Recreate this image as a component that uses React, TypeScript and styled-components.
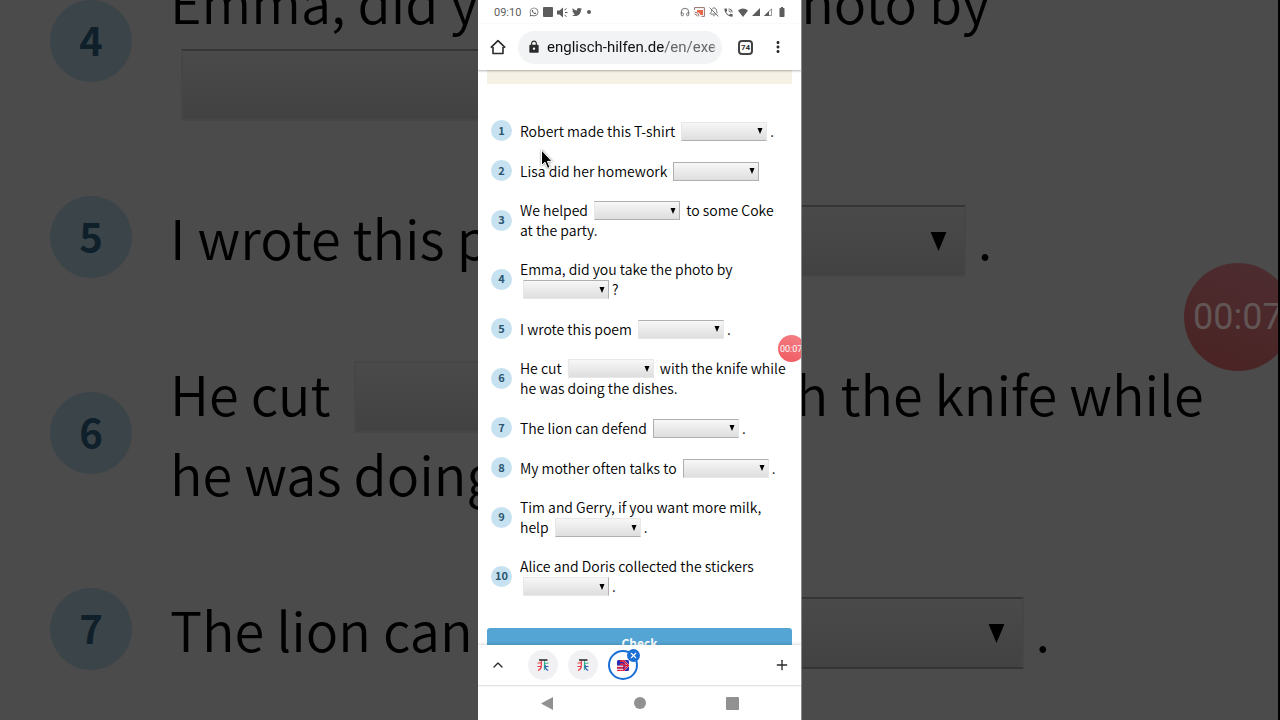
import React from "react";
import styled, { createGlobalStyle, css } from "styled-components";
import { BellOff, ChevronUp, Headphones, Plus, X } from "lucide-react";
import { FaTwitter, FaWhatsapp } from "react-icons/fa";
import { MdBatteryFull, MdLock, MdMoreVert, MdPhoneInTalk } from "react-icons/md";

const textFont = '"Noto Sans CJK SC", "Open Sans", sans-serif';
const systemFont = "Roboto, Arial, sans-serif";

const GlobalStyle = createGlobalStyle`
  * { box-sizing: border-box; }
  body { margin: 0; background: #4b4b4b; overflow: hidden; }
  button { border: 0; padding: 0; background: none; cursor: pointer; }
`;

/* ---------- exercise ---------- */

type Edge = "top" | "right" | "bottom" | "left";

interface Question {
  id: number;
  before: string;
  after: string;
  edges: Edge[];
}

const questions: Question[] = [
  { id: 1, before: "Robert made this T-shirt ", after: ".", edges: ["bottom"] },
  { id: 2, before: "Lisa did her homework ", after: "", edges: ["top", "right", "bottom", "left"] },
  { id: 3, before: "We helped ", after: " to some Coke at the party.", edges: ["top", "right", "bottom"] },
  { id: 4, before: "Emma, did you take the photo by ", after: "?", edges: ["top", "right"] },
  { id: 5, before: "I wrote this poem ", after: ".", edges: ["top"] },
  { id: 6, before: "He cut ", after: " with the knife while he was doing the dishes.", edges: [] },
  { id: 7, before: "The lion can defend ", after: ".", edges: ["top", "bottom", "left"] },
  { id: 8, before: "My mother often talks to ", after: ".", edges: ["top", "left"] },
  { id: 9, before: "Tim and Gerry, if you want more milk, help ", after: ".", edges: ["bottom"] },
  { id: 10, before: "Alice and Doris collected the stickers ", after: ".", edges: ["right"] },
];

const pronouns = ["myself", "yourself", "himself", "herself", "itself", "ourselves", "yourselves", "themselves"];

interface Sized {
  $large?: boolean;
}

const List = styled.ol<Sized>`
  list-style: none;
  margin: 0;
  padding: 0;
  display: flex;
  flex-direction: column;
  gap: ${(p) => (p.$large ? 75 : 19)}px;
`;

const Row = styled.li<Sized>`
  display: flex;
  align-items: center;
  gap: ${(p) => (p.$large ? 38 : 8)}px;
`;

const Badge = styled.span<Sized>`
  flex: none;
  display: flex;
  align-items: center;
  justify-content: center;
  width: ${(p) => (p.$large ? 82 : 21)}px;
  height: ${(p) => (p.$large ? 82 : 21)}px;
  padding-bottom: ${(p) => (p.$large ? 4 : 1)}px;
  border-radius: 50%;
  font: bold ${(p) => (p.$large ? 40 : 11)}px/1 ${textFont};
  color: ${(p) => (p.$large ? "#0f202b" : "#2c5570")};
  background: ${(p) => (p.$large ? "#3b4549" : "#c6e2f0")};
`;

const Sentence = styled.label<Sized>`
  flex: 1;
  color: #000;
  font: 350 ${(p) => (p.$large ? "54px/80px" : "14px/20px")} ${textFont};
`;

const GapBox = styled.span<Sized>`
  position: relative;
  display: inline-block;
  vertical-align: top;
  width: ${(p) => (p.$large ? 341 : 86)}px;
  height: ${(p) => (p.$large ? 72 : 19)}px;
  margin: ${(p) => (p.$large ? "8px 12px 0 11px" : "1px 3px 0 3px")};
`;

const edgeLines = css<Sized & { $edges: Edge[] }>`
  ${(p) => p.$edges.map((e) => `border-${e}-color: ${p.$large ? "#353535" : "#b0b0b0"};`).join("")}
`;

const GapSelect = styled.select<Sized & { $edges: Edge[] }>`
  appearance: none;
  display: block;
  width: 100%;
  height: 100%;
  border: ${(p) => (p.$large ? 2 : 1)}px solid ${(p) => (p.$large ? "#464646" : "#e8e8e8")};
  border-radius: 0;
  background: ${(p) => (p.$large ? "linear-gradient(#4a4a4a, #424242)" : "linear-gradient(#f7f7f7, #dedede)")};
  color: #000;
  font: ${(p) => (p.$large ? 48 : 12)}px ${textFont};
  ${edgeLines}
`;

const Arrow = styled.svg<Sized>`
  position: absolute;
  top: 0;
  bottom: 0;
  margin: auto 0;
  right: ${(p) => (p.$large ? 18 : 4)}px;
  width: ${(p) => (p.$large ? 19 : 6)}px;
  height: ${(p) => (p.$large ? 19 : 6)}px;
  pointer-events: none;
`;

function Exercise({ items, large }: { items: Question[]; large?: boolean }) {
  return (
    <List $large={large}>
      {items.map((q) => {
        const id = `${large ? "back" : "gap"}-${q.id}`;
        return (
          <Row key={q.id} $large={large}>
            <Badge $large={large}>{q.id}</Badge>
            <Sentence $large={large} htmlFor={id}>
              {q.before}
              <GapBox $large={large}>
                <GapSelect id={id} $large={large} $edges={q.edges} defaultValue="">
                  <option value="" aria-label="Choose" />
                  {pronouns.map((w) => (
                    <option key={w}>{w}</option>
                  ))}
                </GapSelect>
                <Arrow $large={large} viewBox="0 0 12 12" aria-hidden>
                  <path d="M1 0H11L6 12Z" fill="#000" />
                </Arrow>
              </GapBox>
              {q.after}
            </Sentence>
          </Row>
        );
      })}
    </List>
  );
}

/* ---------- stage ---------- */

const Stage = styled.main`
  position: relative;
  display: flex;
  justify-content: center;
  height: 100vh;
  overflow: hidden;
`;

const Backdrop = styled.div`
  position: absolute;
  inset: 0;
  overflow: hidden;
  background: #4b4b4b;
  border-right: 2px solid #000;
  padding: 0 50px;

  ${List} {
    margin-top: -39px;
  }
`;

const Phone = styled.div`
  position: relative;
  display: flex;
  flex-direction: column;
  width: min(100vw, 45vh);
  height: 100vh;
  overflow: hidden;
  background: #fff;
  border-right: 1px solid #8a8a8a;
`;

const Timer = styled.div<Sized>`
  position: absolute;
  display: flex;
  align-items: center;
  border-radius: 50%;
  white-space: nowrap;
  ${(p) =>
    p.$large
      ? css`
          top: 263px;
          right: -14px;
          width: 108px;
          height: 108px;
          padding-left: 9px;
          background: linear-gradient(200deg, #4d2d31, #4a2323);
          color: #625555;
          font: 36px ${systemFont};
        `
      : css`
          top: 335px;
          right: -4px;
          width: 27px;
          height: 27px;
          padding-left: 2px;
          background: linear-gradient(200deg, #f58088, #ee5a5e);
          color: #fff;
          font: 9px ${systemFont};
        `}
`;

/* ---------- phone chrome ---------- */

const StatusBar = styled.header`
  flex: none;
  display: flex;
  align-items: center;
  justify-content: space-between;
  height: 24px;
  padding: 0 13px 0 16px;
  color: #5c5c5c;
  font: 11px ${systemFont};
`;

const StatusGroup = styled.div`
  display: flex;
  align-items: center;
  gap: 4px;
`;

const Time = styled.span`
  margin-right: 4px;
`;

const AddressBar = styled.nav`
  position: relative;
  flex: none;
  display: flex;
  align-items: center;
  height: 46px;
  padding: 0 14px 0 11px;
  color: #2b2b2b;
  background: #fff;
  box-shadow: 0 1px 2px rgba(0, 0, 0, 0.3);
`;

const IconButton = styled.button`
  flex: none;
  display: flex;
  align-items: center;
  justify-content: center;
  width: 18px;
  height: 30px;
  color: #2b2b2b;
`;

const Omnibox = styled.div`
  flex: 1;
  min-width: 0;
  display: flex;
  align-items: center;
  gap: 6px;
  height: 33px;
  margin: 0 16px 0 11px;
  padding: 0 6px 0 9px;
  border-radius: 17px;
  background: #f1f3f4;
`;

const Url = styled.a`
  flex: 1;
  overflow: hidden;
  white-space: nowrap;
  color: #111;
  text-decoration: none;
  font: 15px/20px ${systemFont};
  mask-image: linear-gradient(to left, transparent, #000 3px);
`;

const UrlPath = styled.span`
  color: #666;
`;

const TabCount = styled.button`
  flex: none;
  width: 15px;
  height: 15px;
  margin-right: 16px;
  border: 2px solid #444;
  border-radius: 4px;
  color: #333;
  font: bold 8px/11px ${systemFont};
`;

const Page = styled.section`
  flex: 1;
  min-height: 0;
  overflow: hidden;
  padding: 0 9px;
`;

const Notice = styled.div`
  height: 14px;
  margin-bottom: 36px;
  background: #f5f1e4;
`;

const Questions = styled.div`
  padding: 0 3px 0 4px;
`;

const CheckButton = styled.button`
  display: block;
  width: 100%;
  height: 30px;
  margin-top: 32px;
  border-radius: 3px;
  color: #fff;
  background: #54a5d4;
  font: bold 12px/20px ${textFont};
`;

const TabStrip = styled.nav`
  position: relative;
  flex: none;
  display: flex;
  align-items: center;
  gap: 10px;
  height: 41px;
  padding: 0 10px 0 11px;
  background: #fff;
  border-bottom: 1px solid #e2e2e2;
  box-shadow: 0 -1px 3px rgba(0, 0, 0, 0.15);
`;

const Tabs = styled.div`
  flex: 1;
  display: flex;
  gap: 10px;
  padding-left: 11px;
`;

const Tab = styled.button<{ $active?: boolean }>`
  position: relative;
  display: flex;
  align-items: center;
  justify-content: center;
  width: 30px;
  height: 30px;
  border-radius: 50%;
  background: ${(p) => (p.$active ? "#fff" : "#f1f1f3")};
  border: ${(p) => (p.$active ? "2px solid #1a6fd6" : "0")};
`;

const CloseDot = styled.span`
  position: absolute;
  top: -3px;
  right: -4px;
  display: flex;
  align-items: center;
  justify-content: center;
  width: 13px;
  height: 13px;
  border-radius: 50%;
  background: #1a6fd6;
  color: #fff;
`;

const SystemNav = styled.nav`
  flex: none;
  display: flex;
  align-items: center;
  justify-content: space-around;
  height: 34px;
  padding: 0 22px;
`;

const Pointer = styled.svg`
  position: absolute;
  top: 149px;
  left: 62px;
  filter: drop-shadow(0 0 1px rgba(0, 0, 0, 0.5));
`;

function SpeakerIcon() {
  return (
    <svg width="11" height="11" viewBox="0 0 11 11">
      <path d="M0 3.5H2.5L6 .5V10.5L2.5 7.5H0Z" fill="currentColor" />
      <path d="M7.5 3L9.5 1.5M8 5.5H10.5M7.5 8L9.5 9.5" stroke="currentColor" strokeWidth="1" />
    </svg>
  );
}

function CastIcon() {
  return (
    <svg width="11" height="10" viewBox="0 0 11 10">
      <path d="M3 3H9V8H6.5Q6 5.5 3 5Z" fill="#e8694a" />
      <path
        d="M.6 3V.6H10.4V9.4H7.5M.6 5Q4.8 5.2 5.2 9.4M.6 7Q2.8 7.2 3.2 9.4"
        fill="none"
        stroke="#8a6258"
        strokeWidth=".9"
      />
    </svg>
  );
}

function WifiIcon() {
  return (
    <svg width="10" height="9" viewBox="0 0 10 9">
      <path d="M5 9L0 2.5Q5 -1.5 10 2.5Z" fill="currentColor" />
    </svg>
  );
}

function SignalIcon({ partial }: { partial?: boolean }) {
  return (
    <svg width="8" height="8" viewBox="0 0 8 8">
      {partial ? (
        <>
          <path d="M.8 7.6L7.6 .8V7.6Z" fill="none" stroke="currentColor" strokeWidth=".7" />
          <path d="M0 8L5 3V8Z" fill="currentColor" />
        </>
      ) : (
        <path d="M0 8L8 0V8Z" fill="currentColor" />
      )}
    </svg>
  );
}

function HomeIcon() {
  return (
    <svg width="16" height="16" viewBox="0 0 16 16" fill="none" stroke="currentColor" strokeWidth="1.6">
      <path d="M3 8V14.5H13V8M.8 8.6L8 1.6L15.2 8.6" strokeLinejoin="round" />
    </svg>
  );
}

function PiIcon() {
  return (
    <svg width="12" height="12" viewBox="0 0 12 12" fill="none" strokeWidth="1.2">
      <path d="M.5 4H4.3M.5 7.5H4.3M4.3 1.5V6.5Q4.3 10.5 1 11.4" stroke="#e5383f" />
      <path d="M7.5 1.5V11M7.5 5.5Q8.3 4 11.5 4" stroke="#31b08c" />
      <path d="M8 7.5H11.5M8.2 6Q8.2 10.5 11.2 11.4" stroke="#2c62b8" />
      <path d="M2 1H10.5" stroke="#222" strokeWidth="1.5" />
    </svg>
  );
}

function FlagIcon() {
  return (
    <svg width="12" height="11" viewBox="0 0 12 11">
      <rect width="12" height="11" rx="1.5" fill="#2a2ab0" />
      <path d="M0 5.5H6V7H0ZM0 8.5H6V10H0Z" fill="#f3c7d2" />
      <path d="M0 7H6V8.5H0ZM0 10H6V11H0ZM3 0H6V2H3ZM3 3.2H6V5H3Z" fill="#e02040" />
      <path d="M6 0L12 6M6 11L12 5M6 5.5H12" stroke="#e88aa0" strokeWidth="2" />
      <path d="M6 0L12 6M6 11L12 5M6 5.5H12M7 0V11" stroke="#d81836" strokeWidth="1" />
    </svg>
  );
}

export default function App() {
  return (
    <>
      <GlobalStyle />
      <Stage>
        <Backdrop aria-hidden inert>
          <Exercise items={questions.slice(3, 7)} large />
          <Timer $large>00:07</Timer>
        </Backdrop>
        <Phone>
          <StatusBar>
            <StatusGroup>
              <Time>09:10</Time>
              <FaWhatsapp size={10} />
              <svg width="10" height="10">
                <rect width="10" height="10" rx="1" fill="currentColor" />
              </svg>
              <SpeakerIcon />
              <FaTwitter size={10} />
              <svg width="6" height="6">
                <circle cx="3" cy="3" r="2" fill="currentColor" />
              </svg>
            </StatusGroup>
            <StatusGroup>
              <Headphones size={10} />
              <CastIcon />
              <BellOff size={10} />
              <MdPhoneInTalk size={11} />
              <WifiIcon />
              <SignalIcon />
              <SignalIcon partial />
              <MdBatteryFull size={12} />
            </StatusGroup>
          </StatusBar>
          <AddressBar>
            <IconButton aria-label="Home">
              <HomeIcon />
            </IconButton>
            <Omnibox>
              <MdLock size={14} />
              <Url href="#">
                englisch-hilfen.de<UrlPath>/en/exercises</UrlPath>
              </Url>
            </Omnibox>
            <TabCount aria-label="74 open tabs">74</TabCount>
            <IconButton aria-label="Menu">
              <MdMoreVert size={20} />
            </IconButton>
          </AddressBar>
          <Page>
            <Notice />
            <Questions>
              <Exercise items={questions} />
            </Questions>
            <CheckButton>Check</CheckButton>
          </Page>
          <TabStrip>
            <IconButton aria-label="Expand tabs">
              <ChevronUp size={16} />
            </IconButton>
            <Tabs>
              <Tab aria-label="Tab 1">
                <PiIcon />
              </Tab>
              <Tab aria-label="Tab 2">
                <PiIcon />
              </Tab>
              <Tab aria-label="Tab 3" $active>
                <FlagIcon />
                <CloseDot>
                  <X size={9} strokeWidth={3} />
                </CloseDot>
              </Tab>
            </Tabs>
            <IconButton aria-label="New tab">
              <Plus size={16} />
            </IconButton>
          </TabStrip>
          <SystemNav>
            <IconButton aria-label="Back">
              <svg width="12" height="13">
                <path d="M0 6.5L12 0V13Z" fill="#919191" />
              </svg>
            </IconButton>
            <IconButton aria-label="Home screen">
              <svg width="12" height="12">
                <circle cx="6" cy="6" r="6" fill="#919191" />
              </svg>
            </IconButton>
            <IconButton aria-label="Recent apps">
              <svg width="13" height="13">
                <rect width="13" height="13" rx="1" fill="#919191" />
              </svg>
            </IconButton>
          </SystemNav>
          <Timer>00:07</Timer>
          <Pointer width="13" height="21" viewBox="0 0 13 21" aria-hidden>
            <path d="M1.5 1V16.5L5 13.2L7.6 19.4L10 18.3L7.4 12.4H12Z" fill="#000" stroke="#fff" strokeWidth="1" />
          </Pointer>
        </Phone>
      </Stage>
    </>
  );
}
